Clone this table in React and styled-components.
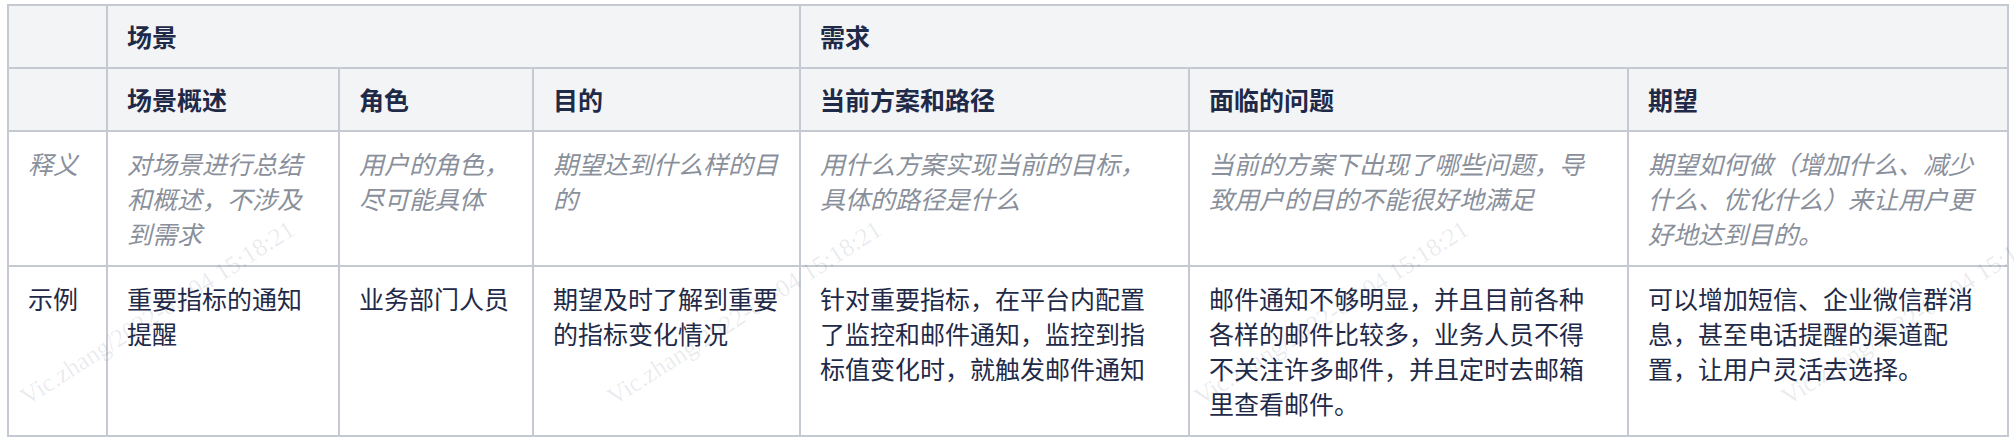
import React from "react";
import styled, { createGlobalStyle } from "styled-components";

const GlobalStyle = createGlobalStyle`
  body {
    margin: 0;
    background: #ffffff;
    font-family: "Noto Sans CJK SC", "Noto Sans", sans-serif;
  }
`;

const columns = [99, 232, 194, 267, 389, 439, 380];

const rows = [
  {
    label: "释义",
    muted: true,
    cells: [
      "对场景进行总结和概述，不涉及到需求",
      "用户的角色，尽可能具体",
      "期望达到什么样的目的",
      "用什么方案实现当前的目标，具体的路径是什么",
      "当前的方案下出现了哪些问题，导致用户的目的不能很好地满足",
      "期望如何做（增加什么、减少什么、优化什么）来让用户更好地达到目的。",
    ],
  },
  {
    label: "示例",
    muted: false,
    cells: [
      "重要指标的通知提醒",
      "业务部门人员",
      "期望及时了解到重要的指标变化情况",
      "针对重要指标，在平台内配置了监控和邮件通知，监控到指标值变化时，就触发邮件通知",
      "邮件通知不够明显，并且目前各种各样的邮件比较多，业务人员不得不关注许多邮件，并且定时去邮箱里查看邮件。",
      "可以增加短信、企业微信群消息，甚至电话提醒的渠道配置，让用户灵活去选择。",
    ],
  },
];

// watermark repeats every ~587px along the bottom of the table
const marks = [30, 617, 1204, 1791];
const MARK_TEXT = "Vic.zhang/2022-05-04 15:18:21";

const Page = styled.div`
  position: relative;
  width: 2014px;
  height: 444px;
  overflow: hidden;
  padding: 4px 0 0 7px;
  box-sizing: border-box;
`;

const Table = styled.table`
  width: 2000px;
  table-layout: fixed;
  border-collapse: collapse;
  border: 2px solid #c5c9d2;
  font-size: 25px;
  line-height: 35px;
`;

const HeadCell = styled.th`
  background: #f3f4f6;
  border: 2px solid #c5c9d2;
  padding: 13px 19px;
  text-align: left;
  font-weight: 700;
  color: #1f2a48;
  white-space: nowrap;
`;

const Cell = styled.td`
  border: 2px solid #c5c9d2;
  padding: 14px 19px;
  vertical-align: top;
  text-align: left;
  color: ${(p) => (p.$muted ? "#8a909b" : "#1f2a48")};
  font-style: ${(p) => (p.$muted ? "italic" : "normal")};
  word-break: break-all;
`;

const Watermarks = styled.div`
  position: absolute;
  inset: 0;
  overflow: hidden;
  pointer-events: none;
`;

const Mark = styled.span`
  position: absolute;
  left: ${(p) => p.$x}px;
  top: 384px;
  font-family: "Liberation Serif", serif;
  font-size: 25px;
  line-height: 26px;
  color: rgba(40, 50, 80, 0.1);
  white-space: nowrap;
  transform: rotate(-32.6deg);
  transform-origin: left bottom;
`;

export default function App() {
  return (
    <>
      <GlobalStyle />
      <Page>
        <Table>
          <colgroup>
            {columns.map((w, i) => (
              <col key={i} style={{ width: w }} />
            ))}
          </colgroup>
          <thead>
            <tr>
              <HeadCell />
              <HeadCell colSpan={3}>场景</HeadCell>
              <HeadCell colSpan={3}>需求</HeadCell>
            </tr>
            <tr>
              <HeadCell />
              <HeadCell>场景概述</HeadCell>
              <HeadCell>角色</HeadCell>
              <HeadCell>目的</HeadCell>
              <HeadCell>当前方案和路径</HeadCell>
              <HeadCell>面临的问题</HeadCell>
              <HeadCell>期望</HeadCell>
            </tr>
          </thead>
          <tbody>
            {rows.map((row) => (
              <tr key={row.label}>
                <Cell $muted={row.muted}>{row.label}</Cell>
                {row.cells.map((text, i) => (
                  <Cell key={i} $muted={row.muted}>
                    {text}
                  </Cell>
                ))}
              </tr>
            ))}
          </tbody>
        </Table>
        <Watermarks>
          {marks.map((x) => (
            <Mark key={x} $x={x}>
              {MARK_TEXT}
            </Mark>
          ))}
        </Watermarks>
      </Page>
    </>
  );
}
